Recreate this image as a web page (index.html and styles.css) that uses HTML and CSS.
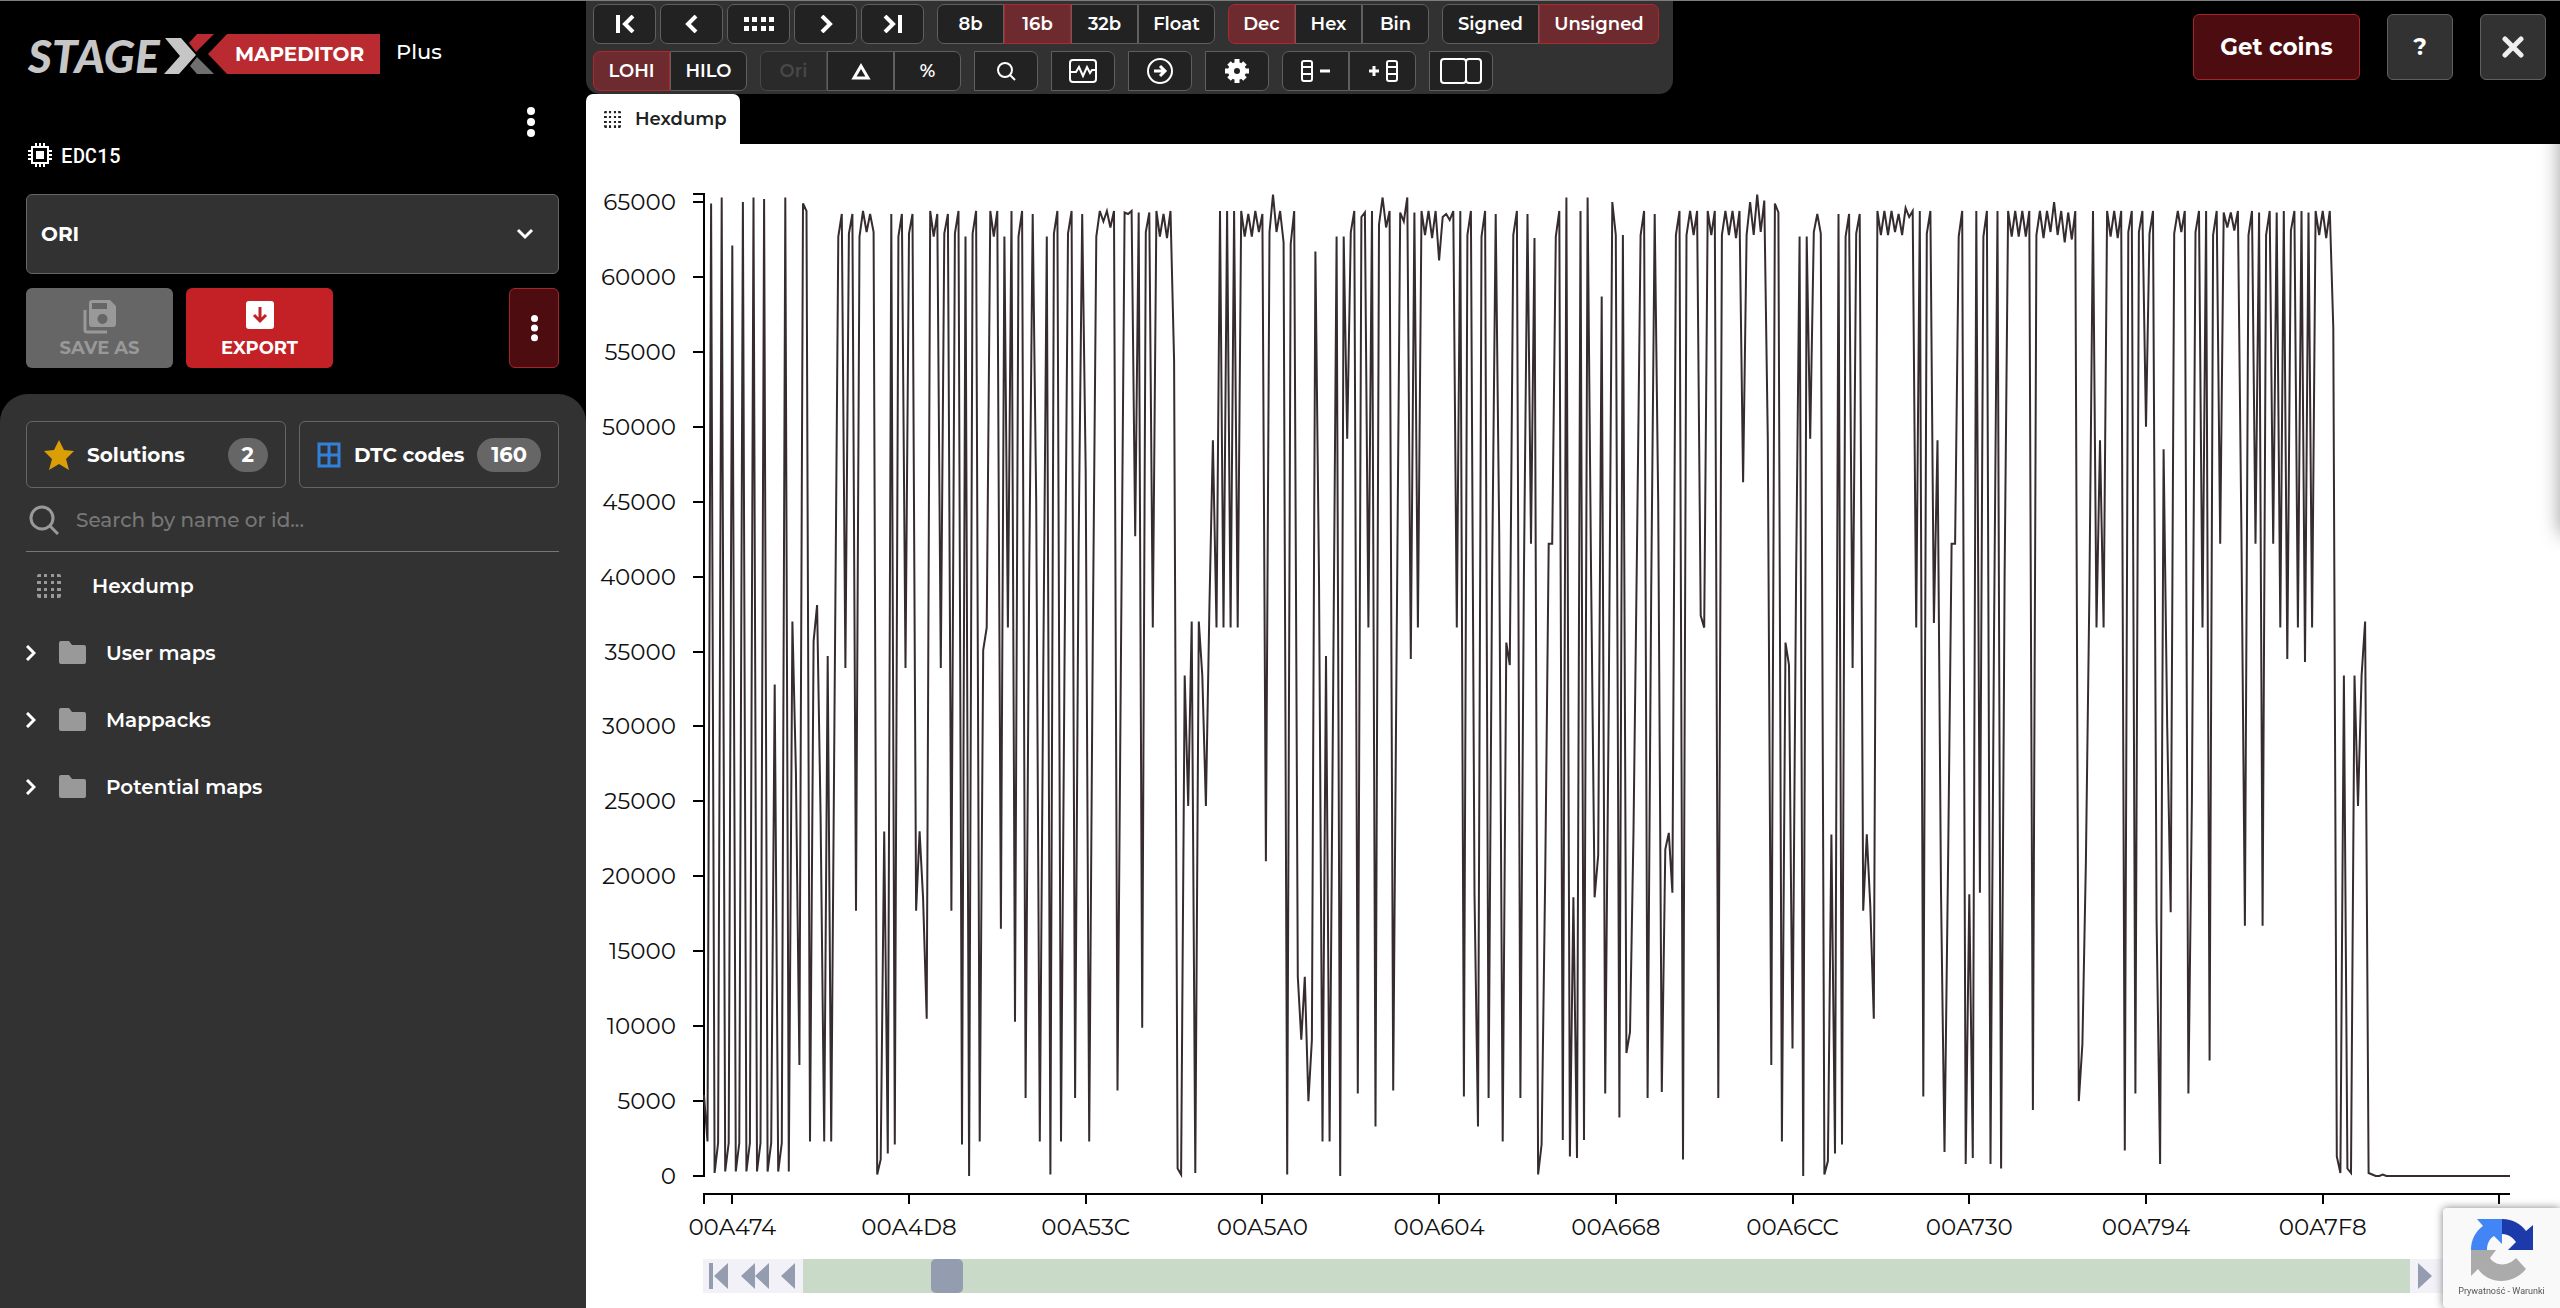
FILE: index.html
```
<!DOCTYPE html>
<html lang="en">
<head>
    <meta charset="UTF-8">
    <title>StageX Mapeditor</title>
    <link rel="stylesheet" href="styles.css">
</head>
<body>
    <svg class="sprite" aria-hidden="true">
        <symbol id="i-dots" viewBox="0 0 24 24">
            <path d="M2 0h2v3H0V2a2 2 0 0 1 2-2zM7 0h3v3H7zM14 0h3v3h-3zM20 0h2a2 2 0 0 1 2 2v1h-4zM0 7h4v3H0zM7 7h3v3H7zM14 7h3v3h-3zM20 7h4v3h-4zM0 14h4v3H0zM7 14h3v3H7zM14 14h3v3h-3zM20 14h4v3h-4zM0 20h4v4H2a2 2 0 0 1-2-2zM7 20h3v4H7zM14 20h3v4h-3zM20 20h4v2a2 2 0 0 1-2 2h-2z"/>
        </symbol>
        <symbol id="i-folder" viewBox="0 0 27 23">
            <path d="M2 0h8l3 4h12a2 2 0 0 1 2 2v15a2 2 0 0 1-2 2H2a2 2 0 0 1-2-2V2a2 2 0 0 1 2-2z"/>
        </symbol>
        <symbol id="i-right" viewBox="0 0 10 16">
            <path d="M1 1l7 7-7 7" fill="none" stroke="currentColor" stroke-width="3"/>
        </symbol>
        <symbol id="i-kebab" viewBox="0 0 8 30">
            <circle cx="4" cy="4" r="4"/><circle cx="4" cy="15" r="4"/><circle cx="4" cy="26" r="4"/>
        </symbol>
        <symbol id="i-search" viewBox="0 0 30 30">
            <g fill="none" stroke="currentColor" stroke-width="3"><circle cx="13" cy="13" r="11"/><path d="M21 21l8 8"/></g>
        </symbol>
    </svg>

    <div class="app">
        <aside class="sidebar">
            <div class="brand">
                <svg class="brand-logo" width="186" height="40" viewBox="0 0 186 40" role="img" aria-label="STAGEX">
                    <text class="brand-text" x="0" y="39">STAGE</text>
                    <path fill="#c6c6c6" d="M137 4h16l15 17-17 19h-15l16-18z"/>
                    <path fill="#b92b31" d="M169 0h17l-18 18-7-9z"/>
                    <path fill="#6f6f6f" d="M162 32l7-9 17 17h-17z"/>
                </svg>
                <span class="brand-badge">MAPEDITOR</span>
                <span class="brand-plan">Plus</span>
            </div>

            <div class="file">
                <div class="ecu">
                    <svg width="24" height="24" viewBox="0 0 24 24">
                        <rect x="4" y="4" width="16" height="16" fill="none" stroke="#fff" stroke-width="2"/>
                        <rect x="8" y="8" width="8" height="8" fill="#fff"/>
                        <path stroke="#fff" stroke-width="2" d="M8 0v4M12 0v4M16 0v4M8 20v4M12 20v4M16 20v4M0 8h4M0 12h4M0 16h4M20 8h4M20 12h4M20 16h4"/>
                    </svg>
                    <span>EDC15</span>
                </div>
                <button type="button" class="file-menu" aria-label="File menu"><svg width="8" height="30"><use href="#i-kebab"/></svg></button>
            </div>

            <div class="version">
                <select class="version-select" aria-label="Version">
                    <option>ORI</option>
                </select>
                <svg class="version-arrow" width="18" height="12" viewBox="0 0 18 12"><path d="M2 2l7 7 7-7" fill="none" stroke="#fff" stroke-width="3"/></svg>
            </div>

            <div class="actions">
                <button type="button" class="action" disabled>
                    <svg width="34" height="34" viewBox="0 0 34 34">
                        <path fill="currentColor" fill-rule="evenodd" d="M9 0h18l6 6v18a3 3 0 0 1-3 3H9a3 3 0 0 1-3-3V3a3 3 0 0 1 3-3zM9 3v6h15V3zM19 14a5 5 0 1 0 1 0z"/>
                        <path fill="none" stroke="currentColor" stroke-width="3" d="M2 10v20a2 2 0 0 0 2 2h20"/>
                    </svg>
                    SAVE AS
                </button>
                <button type="button" class="action action-export">
                    <svg width="28" height="28" viewBox="0 0 28 28">
                        <rect width="28" height="28" rx="3" fill="#fff"/>
                        <path d="M14 6v14M8 14l6 6 6-6" fill="none" stroke="#c42126" stroke-width="3"/>
                    </svg>
                    EXPORT
                </button>
                <button type="button" class="action-menu" aria-label="More"><svg width="7" height="28"><use href="#i-kebab"/></svg></button>
            </div>

            <div class="panel">
                <div class="cards">
                    <button type="button" class="card">
                        <svg width="30" height="30" viewBox="0 0 30 30"><path fill="#dc9e06" d="M15 0l5 10 10 1-8 8 3 11-10-6-10 6 3-11-8-8 10-1z"/></svg>
                        <span>Solutions</span>
                        <span class="count">2</span>
                    </button>
                    <button type="button" class="card">
                        <svg width="24" height="26" viewBox="0 0 24 26"><path fill="none" stroke="#3181dc" stroke-width="3" d="M2 2h20v22H2zM12 2v22M2 13h20"/></svg>
                        <span>DTC codes</span>
                        <span class="count">160</span>
                    </button>
                </div>

                <label class="search">
                    <svg width="30" height="30"><use href="#i-search"/></svg>
                    <input type="text" placeholder="Search by name or id..." aria-label="Search">
                </label>

                <nav class="tree">
                    <a href="#" class="tree-item tree-item-root"><svg class="grey" width="24" height="24"><use href="#i-dots"/></svg>Hexdump</a>
                    <a href="#" class="tree-item"><svg width="10" height="16"><use href="#i-right"/></svg><svg class="grey" width="27" height="23"><use href="#i-folder"/></svg>User maps</a>
                    <a href="#" class="tree-item"><svg width="10" height="16"><use href="#i-right"/></svg><svg class="grey" width="27" height="23"><use href="#i-folder"/></svg>Mappacks</a>
                    <a href="#" class="tree-item"><svg width="10" height="16"><use href="#i-right"/></svg><svg class="grey" width="27" height="23"><use href="#i-folder"/></svg>Potential maps</a>
                </nav>
            </div>
        </aside>

        <main class="main">
            <header class="topbar">
                <div class="topbar-left">
                    <div class="toolbar">
                        <div class="toolbar-row">
                            <div class="nav-buttons">
                                <button type="button" aria-label="First"><svg width="20" height="18" viewBox="0 0 20 18"><path d="M3 0v18M18 1l-8 8 8 8"/></svg></button>
                                <button type="button" aria-label="Previous"><svg width="20" height="18" viewBox="0 0 20 18"><path d="M14 1L6 9l8 8"/></svg></button>
                                <button type="button" aria-label="Grid"><svg class="solid" width="30" height="14" viewBox="0 0 30 14"><path d="M0 0h5v5H0zM8 0h5v5H8zM17 0h5v5h-5zM25 0h5v5h-5zM0 9h5v5H0zM8 9h5v5H8zM17 9h5v5h-5zM25 9h5v5h-5z"/></svg></button>
                                <button type="button" aria-label="Next"><svg width="20" height="18" viewBox="0 0 20 18"><path d="M6 1l8 8-8 8"/></svg></button>
                                <button type="button" aria-label="Last"><svg width="20" height="18" viewBox="0 0 20 18"><path d="M2 1l8 8-8 8M17 0v18"/></svg></button>
                            </div>
                            <div class="group">
                                <button type="button">8b</button>
                                <button type="button" class="active">16b</button>
                                <button type="button">32b</button>
                                <button type="button" class="w-float">Float</button>
                            </div>
                            <div class="group">
                                <button type="button" class="active">Dec</button>
                                <button type="button">Hex</button>
                                <button type="button">Bin</button>
                            </div>
                            <div class="group">
                                <button type="button" class="w-signed">Signed</button>
                                <button type="button" class="w-unsigned active">Unsigned</button>
                            </div>
                        </div>
                        <div class="toolbar-row">
                            <div class="group">
                                <button type="button" class="w-float active">LOHI</button>
                                <button type="button" class="w-float">HILO</button>
                            </div>
                            <div class="group">
                                <button type="button" disabled>Ori</button>
                                <button type="button" aria-label="Difference"><svg class="triangle" width="20" height="18" viewBox="0 0 20 18"><path d="M10 4l7 12H3z"/></svg></button>
                                <button type="button">%</button>
                            </div>
                            <div class="group">
                                <button type="button" class="w-icon" aria-label="Search"><svg class="thin" width="20" height="20" viewBox="0 0 20 20"><circle cx="9" cy="9" r="7"/><path d="M14 14l5 5"/></svg></button>
                            </div>
                            <div class="group">
                                <button type="button" class="w-icon" aria-label="Chart"><svg class="thin" width="28" height="24" viewBox="0 0 28 24"><rect x="1" y="1" width="26" height="22" rx="3"/><path d="M1 13h6l3-5 4 9 4-9 3 6 2-3h4"/></svg></button>
                            </div>
                            <div class="group">
                                <button type="button" class="w-icon" aria-label="Go to"><svg class="thin" width="28" height="28" viewBox="0 0 28 28"><circle cx="14" cy="14" r="12"/><path d="M8 14h11M14 9l5 5-5 5" stroke-width="3"/></svg></button>
                            </div>
                            <div class="group">
                                <button type="button" class="w-icon" aria-label="Settings"><svg width="24" height="24" viewBox="0 0 24 24"><circle cx="12" cy="12" r="6" stroke-width="6"/><path stroke-width="5" d="M12 0v5M12 19v5M0 12h5M19 12h5M4 4l3 3M17 17l3 3M20 4l-3 3M7 17l-3 3"/></svg></button>
                            </div>
                            <div class="group">
                                <button type="button" aria-label="Remove column"><svg class="thin" width="30" height="22" viewBox="0 0 30 22"><rect x="1" y="1" width="10" height="20" rx="2"/><path d="M1 7h10M1 14h10"/><path d="M19 11h10" stroke-width="3"/></svg></button>
                                <button type="button" aria-label="Add column"><svg class="thin" width="30" height="22" viewBox="0 0 30 22"><rect x="19" y="1" width="10" height="20" rx="2"/><path d="M19 7h10M19 14h10"/><path d="M1 11h10M6 6v10" stroke-width="3"/></svg></button>
                            </div>
                            <div class="group">
                                <button type="button" class="w-icon" aria-label="Split view"><svg class="thin" width="42" height="26" viewBox="0 0 42 26"><rect x="1" y="1" width="25" height="24" rx="3"/><rect x="26" y="1" width="15" height="24" rx="3"/></svg></button>
                            </div>
                        </div>
                    </div>
                    <div class="tab"><svg width="17" height="17"><use href="#i-dots"/></svg>Hexdump</div>
                </div>
                <div class="topbar-right">
                    <button type="button" class="coins">Get coins</button>
                    <button type="button" class="square">?</button>
                    <button type="button" class="square" aria-label="Close"><svg width="22" height="22" viewBox="0 0 22 22"><path d="M3 3l16 16M19 3L3 19" stroke="#eee" stroke-width="5" stroke-linecap="round"/></svg></button>
                </div>
            </header>

            <section class="content">
                <svg id="chart" class="chart"></svg>
                <div class="scroller">
                    <button type="button" aria-label="Start"><svg width="20" height="26" viewBox="0 0 20 26"><path d="M0 0h4v26H0zM19 0v26L5 13z"/></svg></button>
                    <button type="button" aria-label="Page back"><svg width="28" height="26" viewBox="0 0 28 26"><path d="M14 0v26L0 13zM28 0v26L14 13z"/></svg></button>
                    <button type="button" aria-label="Back"><svg width="14" height="26" viewBox="0 0 14 26"><path d="M14 0v26L0 13z"/></svg></button>
                    <input type="range" min="0" max="1000" value="81" aria-label="Position">
                    <button type="button" aria-label="Forward"><svg width="14" height="26" viewBox="0 0 14 26"><path d="M0 0v26l14-13z"/></svg></button>
                    <button type="button" aria-label="Page forward"><svg width="28" height="26" viewBox="0 0 28 26"><path d="M0 0v26l14-13zM14 0v26l14-13z"/></svg></button>
                    <button type="button" aria-label="End"><svg width="20" height="26" viewBox="0 0 20 26"><path d="M16 0h4v26h-4zM1 0v26l14-13z"/></svg></button>
                </div>
            </section>
        </main>
    </div>

    <div class="captcha">
        <svg width="62" height="62" viewBox="0 0 62 62">
            <path fill="#1c3aa9" d="M31 0c11 0 19 5 24 12l7-6v25H37l8-8c-3-4-7-8-14-8z"/>
            <path fill="#4285f4" d="M31 0v25l-8-8c-5 3-7 8-7 14H0C0 20 5 12 12 7L6 0z"/>
            <path fill="#ababab" d="M0 31h25l-6 8c5 8 18 9 26 0l10 11c-13 16-37 16-48 0l-7 7z"/>
        </svg>
        <span>Prywatność - Warunki</span>
    </div>

    <script src="chart.js"></script>
</body>
</html>
```
FILE: styles.css
```
* {
    box-sizing: border-box;
}

body {
    margin: 0;
    background: #000;
    color: #fff;
    font-family: "Montserrat", "Inter", sans-serif;
    font-size: 20px;
    font-weight: 600;
}

button, input, select {
    font: inherit;
    color: inherit;
}

button {
    padding: 0;
    cursor: pointer;
}

svg {
    display: block;
    flex: none;
    fill: currentColor;
}

.sprite {
    display: none;
}

.app {
    display: grid;
    grid-template-columns: 586px 1fr;
    height: 100vh;
    border-top: 1px solid #7d7d7d;
}

/* sidebar */

.sidebar {
    display: flex;
    flex-direction: column;
}

.brand {
    display: flex;
    align-items: center;
    padding: 33px 28px 0;
}

.brand-logo {
    overflow: visible;
}

.brand-text {
    font-family: "Lato", sans-serif;
    font-size: 46px;
    font-weight: 900;
    font-style: italic;
    fill: #c6c6c6;
}

.brand-badge {
    width: 172px;
    height: 40px;
    margin-left: -6px;
    padding-left: 27px;
    line-height: 40px;
    font-weight: 700;
    background: #b92b31;
    clip-path: polygon(0 50%, 19px 0, 100% 0, 100% 100%, 19px 100%);
}

.brand-plan {
    margin: 0 0 6px 16px;
    font-size: 21px;
    font-weight: 500;
}

.file {
    display: flex;
    justify-content: space-between;
    padding: 33px 51px 0 28px;
}

.ecu {
    display: flex;
    align-items: center;
    gap: 9px;
    height: 24px;
    margin-top: 36px;
    font-family: "Roboto Mono", "DejaVu Sans Mono", monospace;
    font-weight: 500;
}

.file-menu {
    height: 30px;
    border: 0;
    background: none;
}

.version {
    position: relative;
    margin: 27px 27px 0 26px;
}

.version-select {
    display: block;
    width: 100%;
    height: 80px;
    padding: 0 14px;
    border: 1px solid #666;
    border-radius: 6px;
    background: #323232;
    font-weight: 700;
    appearance: none;
}

.version-arrow {
    position: absolute;
    right: 25px;
    top: 34px;
    pointer-events: none;
}

.actions {
    display: flex;
    gap: 13px;
    padding: 14px 27px 26px 26px;
}

.action {
    display: flex;
    flex-direction: column;
    align-items: center;
    justify-content: flex-end;
    gap: 8px;
    width: 147px;
    height: 80px;
    padding-bottom: 9px;
    border: 0;
    border-radius: 6px;
    background: #666;
    color: #999;
    font-size: 18px;
    font-weight: 700;
}

.action:disabled {
    gap: 3px;
}

.action-export {
    background: #c42126;
    color: #fff;
}

.action-menu {
    display: flex;
    align-items: center;
    justify-content: center;
    width: 50px;
    margin-left: auto;
    border: 1px solid #a5252b;
    border-radius: 6px;
    background: #4d0d10;
}

.panel {
    flex: 1;
    padding: 27px 27px 0 26px;
    border-radius: 28px 28px 0 0;
    background: #323232;
}

.cards {
    display: grid;
    grid-template-columns: 1fr 1fr;
    gap: 13px;
}

.card {
    display: flex;
    align-items: center;
    gap: 13px;
    height: 67px;
    padding: 0 17px;
    border: 1px solid #666;
    border-radius: 6px;
    background: none;
    font-weight: 700;
    white-space: nowrap;
}

.count {
    height: 34px;
    margin-left: auto;
    padding: 0 14px;
    border-radius: 17px;
    background: #666;
    font-size: 21px;
    line-height: 34px;
}

/* the badge may come closer to the label than the icon does */
.card span + .count {
    margin-left: auto;
}

.card span:nth-child(2) {
    margin-right: -6px;
}

.search {
    display: flex;
    align-items: center;
    gap: 17px;
    height: 64px;
    padding: 0 3px;
    border-bottom: 1px solid #777;
    color: #999;
}

.search input {
    flex: 1;
    padding: 0;
    border: 0;
    outline: 0;
    background: none;
    font-weight: 500;
}

.search input::placeholder {
    color: #777;
}

.tree-item {
    display: flex;
    align-items: center;
    height: 67px;
    color: #fff;
    text-decoration: none;
}

.tree-item .grey {
    margin: 0 20px 0 23px;
}

.tree-item-root .grey {
    margin: 0 31px 0 11px;
}

.grey {
    color: #999;
}

/* top bar */

.main {
    display: flex;
    flex-direction: column;
    min-width: 0;
}

.topbar {
    display: flex;
    justify-content: space-between;
    align-items: flex-start;
}

.toolbar {
    display: flex;
    flex-direction: column;
    gap: 7px;
    padding: 3px 14px 3px 7px;
    border-radius: 0 0 14px 14px;
    background: #323232;
}

.toolbar-row, .nav-buttons, .group {
    display: flex;
}

.toolbar-row {
    gap: 13px;
}

.nav-buttons {
    gap: 4px;
}

.toolbar button {
    display: flex;
    align-items: center;
    justify-content: center;
    width: 67px;
    height: 40px;
    border: 1px solid #5f5f5f;
    background: #222;
    font-size: 18px;
}

.toolbar .nav-buttons button {
    width: 63px;
    border-radius: 7px;
}

.toolbar .w-icon {
    width: 64px;
    border-radius: 7px;
}

.toolbar .w-float {
    width: 77px;
}

.toolbar .w-signed {
    width: 97px;
}

.toolbar .w-unsigned {
    width: 120px;
}

.toolbar .active {
    border-color: #b3262c;
    background: #6e2b2f;
}

.toolbar button:disabled {
    border-color: #484848;
    background: #2a2a2a;
    color: #484848;
}

.group button:first-child {
    border-radius: 7px 0 0 7px;
}

.group button:last-child {
    border-radius: 0 7px 7px 0;
}

.toolbar svg {
    fill: none;
    stroke: currentColor;
    stroke-width: 4;
}

.toolbar .thin {
    stroke-width: 2;
}

.toolbar .triangle {
    stroke-width: 3;
}

.toolbar .solid {
    fill: currentColor;
    stroke: none;
}

.tab {
    display: inline-flex;
    align-items: center;
    gap: 14px;
    height: 50px;
    padding: 0 14px 0 18px;
    border-radius: 7px 7px 0 0;
    background: #fff;
    color: #222;
    font-size: 18px;
}

.topbar-right {
    display: flex;
    gap: 27px;
    padding: 13px 14px 0 0;
}

.coins, .square {
    display: flex;
    align-items: center;
    justify-content: center;
    width: 66px;
    height: 66px;
    border: 1px solid #5f5f5f;
    border-radius: 6px;
    background: #323232;
    font-size: 23px;
    font-weight: 700;
}

.coins {
    width: 167px;
    border-color: #a5252b;
    background: #4d0d10;
}

/* chart */

.content {
    position: relative;
    display: flex;
    flex: 1;
    flex-direction: column;
    min-height: 0;
    overflow: hidden;
    background: #fff;
}

/* shadow of the drawer that is parked off the right edge */
.content::after {
    content: "";
    position: absolute;
    top: -20px;
    left: 100%;
    width: 20px;
    height: 410px;
    box-shadow: 0 0 20px rgba(0, 0, 0, 0.4);
}

.chart {
    flex: 1;
    width: 100%;
    min-height: 0;
}

.chart text {
    fill: #111;
    font-size: 23px;
    font-weight: 400;
}

.chart .axis {
    fill: none;
    stroke: #000;
    stroke-width: 2;
    shape-rendering: crispEdges;
}

.chart .line {
    fill: none;
    stroke: #362c30;
    stroke-width: 2;
}

.scroller {
    display: flex;
    justify-content: space-between;
    height: 34px;
    margin: 0 50px 15px 117px;
    background: #f2f1f8;
    color: #949cb0;
}

.scroller button {
    display: flex;
    align-items: center;
    padding: 0 6px;
    border: 0;
    background: none;
    color: inherit;
}

.scroller input {
    flex: 1;
    height: 34px;
    margin: 0 2px;
    background: #c9dac8;
    appearance: none;
}

.scroller input::-webkit-slider-thumb {
    width: 32px;
    height: 34px;
    border-radius: 5px;
    background: #949cb0;
    appearance: none;
}

.captcha {
    position: fixed;
    right: 0;
    bottom: 0;
    display: flex;
    flex-direction: column;
    align-items: center;
    width: 117px;
    height: 100px;
    padding-top: 11px;
    border-radius: 4px 0 0 4px;
    background: #f9f9f9;
    box-shadow: 0 0 8px #808080;
    color: #555;
    font-family: "Roboto", sans-serif;
    font-size: 9px;
    font-weight: 400;
}

.captcha span {
    margin-top: 5px;
}
```
FILE: chart.js
```
// 16 bit LOHI values from 0xA464, in hundreds
const start = 0xA464;
const values = [
    54, 23, 649, 2, 22, 653, 3, 22, 621, 3, 22, 650, 3, 22, 653, 3, 22, 652, 3, 22,
    328, 3, 22, 653, 3, 370, 270, 74, 649, 644, 23, 357, 381, 240, 23, 347, 23, 335, 627, 642,
    339, 629, 642, 177, 627, 644, 630, 642, 630, 1, 11, 230, 15, 642, 21, 627, 642, 339, 629, 642,
    177, 230, 185, 105, 644, 627, 642, 339, 629, 642, 177, 629, 644, 21, 627, 0, 629, 644, 23, 351,
    366, 644, 627, 644, 165, 627, 366, 644, 103, 627, 644, 52, 400, 642, 450, 23, 340, 627, 1, 629,
    644, 23, 340, 629, 644, 52, 420, 642, 470, 23, 360, 627, 644, 637, 644, 633, 644, 57, 350, 643,
    642, 644, 427, 643, 99, 630, 643, 366, 644, 627, 642, 626, 644, 544, 5, 1, 334, 247, 370, 2,
    370, 334, 247, 379, 491, 366, 644, 366, 644, 366, 644, 366, 644, 627, 642, 627, 644, 630, 642, 210,
    630, 655, 630, 644, 623, 1, 622, 644, 133, 91, 133, 50, 91, 617, 400, 23, 347, 23, 320, 627,
    0, 627, 492, 630, 644, 55, 640, 643, 366, 644, 33, 635, 653, 633, 644, 57, 360, 643, 637, 653,
    345, 643, 366, 644, 628, 644, 626, 644, 611, 640, 642, 638, 644, 366, 644, 53, 628, 644, 188, 33,
    627, 644, 52, 400, 642, 430, 23, 356, 341, 628, 644, 52, 400, 642, 422, 626, 1, 21, 200, 422,
    422, 627, 644, 24, 653, 13, 186, 12, 644, 24, 653, 400, 186, 214, 587, 55, 320, 650, 628, 39,
    628, 82, 96, 230, 420, 628, 644, 52, 390, 642, 450, 56, 218, 229, 189, 628, 644, 11, 628, 644,
    628, 644, 374, 366, 644, 628, 644, 52, 628, 644, 628, 644, 626, 644, 463, 628, 650, 628, 655, 630,
    651, 492, 74, 649, 643, 23, 356, 341, 85, 400, 627, 0, 627, 492, 630, 642, 629, 1, 10, 228,
    15, 642, 21, 627, 642, 339, 629, 642, 177, 228, 180, 105, 644, 628, 644, 628, 644, 630, 642, 628,
    646, 640, 644, 366, 644, 53, 629, 644, 369, 491, 190, 16, 210, 422, 422, 627, 644, 8, 188, 12,
    644, 189, 627, 644, 8, 360, 644, 5, 400, 644, 627, 644, 627, 644, 627, 644, 44, 628, 644, 626,
    644, 630, 650, 628, 644, 623, 643, 625, 644, 50, 88, 210, 390, 644, 366, 491, 366, 644, 627, 644,
    626, 644, 17, 630, 644, 55, 630, 644, 500, 629, 644, 170, 8, 485, 300, 176, 629, 644, 630, 644,
    55, 250, 630, 644, 366, 644, 77, 628, 644, 422, 643, 633, 643, 631, 644, 430, 167, 628, 644, 422,
    643, 167, 628, 644, 422, 643, 366, 644, 345, 631, 644, 366, 644, 343, 643, 366, 644, 628, 644, 626,
    644, 566, 13, 2, 334, 5, 2, 334, 247, 334, 370, 2, 1, 0, 0, 1
];

// the rest of the 512 samples is empty
while (values.length < 512) {
    values.push(0);
}

const svg = document.getElementById('chart');
const margin = { top: 50, right: 50, bottom: 83, left: 118 };

function draw() {
    const right = svg.clientWidth - margin.right;
    const bottom = svg.clientHeight - margin.bottom;
    const axisY = bottom + 18;
    const x = i => margin.left + i * (right - margin.left) / 511;
    const y = v => bottom - v * (bottom - margin.top) / 65535;

    let axis = `M${margin.left - 11} ${margin.top}H${margin.left}V${bottom}H${margin.left - 11}`;
    axis += `M${margin.left} ${axisY + 10}V${axisY}H${right}`;
    let labels = '';

    for (let v = 0; v <= 65000; v += 5000) {
        axis += `M${margin.left - 11} ${Math.round(y(v))}H${margin.left}`;
        labels += `<text x="${margin.left - 28}" y="${y(v) + 8}" text-anchor="end">${v}</text>`;
    }

    for (let i = 8; i < 512; i += 50) {
        const address = (start + i * 2).toString(16).toUpperCase().padStart(6, '0');
        axis += `M${Math.round(x(i))} ${axisY}v10`;
        labels += `<text x="${x(i)}" y="${axisY + 41}" text-anchor="middle">${address}</text>`;
    }

    const points = values.map((v, i) => x(i).toFixed(1) + ',' + y(v * 100).toFixed(1)).join(' ');
    svg.innerHTML = `<path class="axis" d="${axis}"/>${labels}<polyline class="line" points="${points}"/>`;
}

draw();
window.addEventListener('resize', draw);
```
